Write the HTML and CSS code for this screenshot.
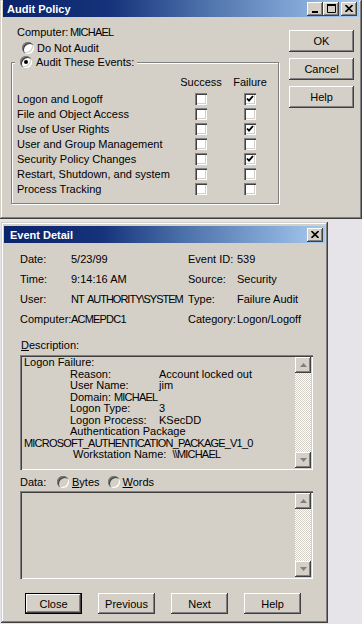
FILE: index.html
```html
<!DOCTYPE html>
<html lang="en">
<head>
<meta charset="utf-8">
<link rel="stylesheet" href="styles.css">
</head>
<body>
<div class="win audit">
  <div class="title">
    <span class="title-text">Audit Policy</span>
    <div class="title-btns">
      <span class="tbtn"><svg width="8" height="8" viewBox="0 0 8 8"><rect x="1" y="6" width="6" height="2" fill="#000"/></svg></span>
      <span class="tbtn"><svg width="9" height="9" viewBox="0 0 9 9"><path d="M0.5 1.5h8v7h-8z" fill="none" stroke="#000"/><rect x="0" y="0" width="9" height="2" fill="#000"/></svg></span>
      <span class="tbtn close"><svg width="8" height="7" viewBox="0 0 8 7"><path d="M0.5 0l7 7M7.5 0l-7 7" stroke="#000" stroke-width="1.6"/></svg></span>
    </div>
  </div>
  <div class="audit-body">
    <div class="audit-left">
      <div class="computer"><span class="computer-lbl">Computer:</span><span class="caps">MICHAEL</span></div>
      <div class="radio-row"><span class="radio"></span>Do Not Audit</div>
      <fieldset class="group">
        <legend><span class="radio on"></span>Audit These Events:</legend>
        <div class="events">
          <span></span><span class="hd">Success</span><span class="hd">Failure</span>
          <span>Logon and Logoff</span><i class="cb"></i><i class="cb"><svg width="12" height="12" viewBox="0 0 12 12"><path d="M3 5.5l2 2.2 4-4.7" fill="none" stroke="#000" stroke-width="1.8"/></svg></i>
          <span>File and Object Access</span><i class="cb"></i><i class="cb"></i>
          <span>Use of User Rights</span><i class="cb"></i><i class="cb"><svg width="12" height="12" viewBox="0 0 12 12"><path d="M3 5.5l2 2.2 4-4.7" fill="none" stroke="#000" stroke-width="1.8"/></svg></i>
          <span>User and Group Management</span><i class="cb"></i><i class="cb"></i>
          <span>Security Policy Changes</span><i class="cb"></i><i class="cb"><svg width="12" height="12" viewBox="0 0 12 12"><path d="M3 5.5l2 2.2 4-4.7" fill="none" stroke="#000" stroke-width="1.8"/></svg></i>
          <span>Restart, Shutdown, and system</span><i class="cb"></i><i class="cb"></i>
          <span>Process Tracking</span><i class="cb"></i><i class="cb"></i>
        </div>
      </fieldset>
    </div>
    <div class="audit-btns">
      <button class="btn">OK</button>
      <button class="btn">Cancel</button>
      <button class="btn">Help</button>
    </div>
  </div>
</div>

<div class="win detail">
  <div class="title">
    <span class="title-text">Event Detail</span>
    <div class="title-btns">
      <span class="tbtn close"><svg width="8" height="7" viewBox="0 0 8 7"><path d="M0.5 0l7 7M7.5 0l-7 7" stroke="#000" stroke-width="1.6"/></svg></span>
    </div>
  </div>
  <div class="detail-body">
    <div class="info">
      <span>Date:</span><span>5/23/99</span><span>Event ID:</span><span>539</span>
      <span>Time:</span><span>9:14:16 AM</span><span>Source:</span><span>Security</span>
      <span>User:</span><span class="caps tight">NT AUTHORITY\SYSTEM</span><span>Type:</span><span>Failure Audit</span>
      <span>Computer:</span><span class="caps">ACMEPDC1</span><span>Category:</span><span>Logon/Logoff</span>
    </div>
    <div class="desc-lbl"><u>D</u>escription:</div>
    <div class="box desc">
      <div class="desc-text">
        <div>Logon Failure:</div>
        <div class="ind"><span class="k">Reason:</span>Account locked out</div>
        <div class="ind"><span class="k">User Name:</span>jim</div>
        <div class="ind"><span class="k short">Domain:</span><span class="caps">MICHAEL</span></div>
        <div class="ind"><span class="k">Logon Type:</span>3</div>
        <div class="ind"><span class="k">Logon Process:</span>KSecDD</div>
        <div class="ind">Authentication Package</div>
        <div class="caps">MICROSOFT_AUTHENTICATION_PACKAGE_V1_0</div>
        <div class="ind ws">Workstation Name:  <span class="caps">\\MICHAEL</span></div>
      </div>
      <div class="scroll">
        <span class="sbtn"><svg width="7" height="4" viewBox="0 0 7 4"><path d="M3.5 0L7 4H0z" fill="#808080"/></svg></span>
        <span class="track"></span>
        <span class="sbtn"><svg width="7" height="4" viewBox="0 0 7 4"><path d="M0 0h7L3.5 4z" fill="#808080"/></svg></span>
      </div>
    </div>
    <div class="data-row">
      <span class="data-lbl">Data:</span>
      <span class="radio off"></span><span class="opt"><u>B</u>ytes</span>
      <span class="radio off"></span><span class="opt"><u>W</u>ords</span>
    </div>
    <div class="box data">
      <div class="desc-text"></div>
      <div class="scroll">
        <span class="sbtn"><svg width="7" height="4" viewBox="0 0 7 4"><path d="M3.5 0L7 4H0z" fill="#808080"/></svg></span>
        <span class="track"></span>
        <span class="sbtn"><svg width="7" height="4" viewBox="0 0 7 4"><path d="M0 0h7L3.5 4z" fill="#808080"/></svg></span>
      </div>
    </div>
    <div class="detail-btns">
      <button class="btn default">Close</button>
      <button class="btn">Previous</button>
      <button class="btn">Next</button>
      <button class="btn">Help</button>
    </div>
  </div>
</div>
</body>
</html>
```

FILE: styles.css
```css
*{
	margin: 0;
	padding: 0;
	box-sizing: border-box;
}
body{
	width: 362px;
	height: 624px;
	overflow: hidden;
	background: #e6e4e9;
	font: 11px "Liberation Sans", Arial, sans-serif;
	color: #000;
}
.caps{
	letter-spacing: -0.8px;
	word-spacing: 1px;
}
.caps.tight{
	letter-spacing: -1px;
	word-spacing: 2px;
	white-space: nowrap;
}
.win{
	background: #d4d0c8;
	box-shadow: inset -1px -1px #404040, inset 1px 1px #d4d0c8, inset -2px -2px #808080, inset 2px 2px #fff;
}
.title{
	height: 17px;
	display: flex;
	align-items: center;
	justify-content: space-between;
	padding: 0 2px 0 4px;
	background: linear-gradient(to right, #0a246a 0%, #15327a 30%, #4a6ea8 55%, #a6caf0 100%);
	color: #fff;
	font-weight: bold;
}
.title-btns{
	display: flex;
}
.tbtn{
	width: 16px;
	height: 14px;
	display: flex;
	align-items: center;
	justify-content: center;
	background: #d4d0c8;
	box-shadow: inset -1px -1px #404040, inset 1px 1px #fff, inset -2px -2px #808080;
}
.tbtn.close{
	margin-left: 2px;
}

/* audit policy */
.audit{
	height: 219px;
	padding: 0 3px 3px 3px;
}
.audit-body{
	display: flex;
	padding-top: 8px;
}
.audit-left{
	margin-left: 8px;
	width: 268px;
}
.computer{
	height: 14px;
	line-height: 14px;
	padding-left: 6px;
	white-space: nowrap;
}
.computer-lbl{
	display: inline-block;
	width: 53px;
}
.radio-row{
	margin-top: 2px;
	height: 14px;
	display: flex;
	align-items: center;
	padding-left: 11px;
}
.radio{
	width: 12px;
	height: 12px;
	border-radius: 50%;
	background: #fff;
	box-shadow: inset 1px 1px #808080, inset 2px 2px #404040, inset -1px -1px #fff, inset -2px -2px #d4d0c8;
	margin-right: 3px;
	display: flex;
	align-items: center;
	justify-content: center;
	flex: none;
}
.radio.on::after{
	content: "";
	width: 4px;
	height: 4px;
	border-radius: 50%;
	background: #000;
}
.radio.off{
	background: #d4d0c8;
}
.group{
	border: 1px solid #808080;
	box-shadow: 1px 1px #fff, inset 1px 1px #fff;
	padding: 0 0 6px 5px;
	height: 149px;
}
.group legend{
	display: flex;
	align-items: center;
	height: 14px;
	margin-left: -2px;
	padding: 0 3px 0 5px;
	background: #d4d0c8;
}
.group legend .radio{
	margin-right: 4px;
}
.events{
	display: grid;
	grid-template-columns: 163px 42px 56px;
	grid-template-rows: 14px repeat(7, 15px);
	margin-top: 7px;
	align-items: center;
}
.events .hd{
	justify-self: center;
	align-self: start;
}
.events > :nth-child(n+4){
	transform: translateY(1px);
}
.cb{
	justify-self: center;
	width: 12px;
	height: 12px;
	background: #fff;
	box-shadow: inset 1px 1px #808080, inset 2px 2px #404040, inset -1px -1px #fff, inset -2px -2px #d4d0c8;
	display: flex;
}
.audit-btns{
	margin-left: 10px;
	margin-top: 5px;
	display: flex;
	flex-direction: column;
	gap: 6px;
}
.btn{
	font: inherit;
	color: #000;
	background: #d4d0c8;
	border: 0;
	box-shadow: inset -1px -1px #404040, inset 1px 1px #fff, inset -2px -2px #808080, inset 2px 2px #d4d0c8;
}
.audit-btns .btn{
	width: 65px;
	height: 22px;
}

/* event detail */
.detail{
	margin: 3px 0 0 1px;
	width: 327px;
	height: 401px;
	padding: 4px 3px 3px 3px;
}
.detail .title-text{
	padding-left: 2px;
}
.detail-body{
	padding: 6px 11px 0 16px;
}
.info{
	display: grid;
	grid-template-columns: 51px 117px 49px 1fr;
	grid-auto-rows: 20px;
	align-items: center;
	white-space: nowrap;
}
.desc-lbl{
	margin-top: 9px;
	height: 14px;
	line-height: 14px;
	padding-left: 1px;
}
.box{
	display: flex;
	width: 293px;
	padding: 2px;
	box-shadow: inset 1px 1px #808080, inset 2px 2px #404040, inset -1px -1px #fff, inset -2px -2px #d4d0c8;
}
.desc{
	margin-top: 3px;
	height: 115px;
}
.desc-text{
	flex: 1;
	padding-left: 2px;
	line-height: 11.5px;
	white-space: nowrap;
	overflow: hidden;
}
.ind{
	padding-left: 46px;
}
.k{
	display: inline-block;
	width: 89px;
}
.k.short{
	width: 44px;
}
.ws{
	padding-left: 49px;
	white-space: pre;
}
.scroll{
	width: 16px;
	display: flex;
	flex-direction: column;
}
.sbtn{
	height: 16px;
	display: flex;
	align-items: center;
	justify-content: center;
	background: #d4d0c8;
	box-shadow: inset -1px -1px #404040, inset 1px 1px #fff, inset -2px -2px #808080;
}
.track{
	flex: 1;
	background: repeating-conic-gradient(#fff 0 25%, #d4d0c8 0 50%) 0 0/2px 2px;
}
.data-row{
	margin-top: 5px;
	height: 14px;
	display: flex;
	align-items: center;
}
.data-lbl{
	width: 37px;
}
.opt{
	margin-right: 8px;
}
.data{
	margin-top: 2px;
	height: 88px;
}
.detail-btns{
	margin-top: 14px;
	padding-left: 5px;
	display: flex;
	gap: 16px;
}
.detail-btns .btn{
	width: 57px;
	height: 21px;
}
.btn.default{
	box-shadow: inset 0 0 0 1px #000, inset -2px -2px #404040, inset 2px 2px #fff, inset -3px -3px #808080;
}
```
